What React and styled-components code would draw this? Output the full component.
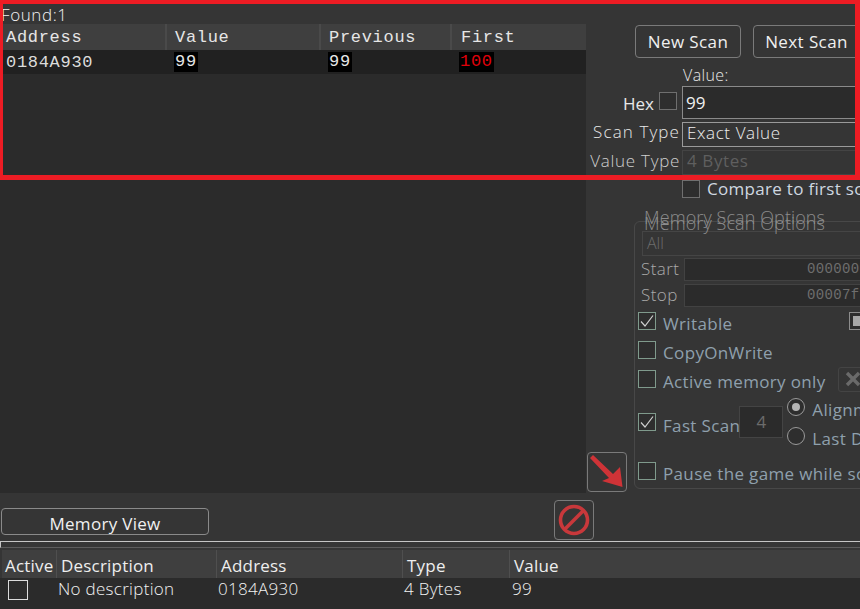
import React from "react";
import styled, { createGlobalStyle } from "styled-components";

const GlobalStyle = createGlobalStyle`
  html, body {
    margin: 0;
    padding: 0;
    background: #353535;
  }
  * {
    box-sizing: border-box;
  }
`;

const UI_FONT = `"Open Sans", "Noto Sans", sans-serif`;
const MONO_FONT = `"Liberation Mono", monospace`;

const foundColumns = [
  { name: "Address", width: 167, pad: 6 },
  { name: "Value", width: 154, pad: 8 },
  { name: "Previous", width: 131, pad: 8 },
  { name: "First", width: 132, pad: 9 },
];

const savedColumns = [
  { name: "Active", width: 55, pad: 3 },
  { name: "Description", width: 160, pad: 4 },
  { name: "Address", width: 186, pad: 4 },
  { name: "Type", width: 107, pad: 4 },
  { name: "Value", width: 200, pad: 4 },
];

const Window = styled.div`
  position: relative;
  width: 860px;
  height: 609px;
  overflow: hidden;
  display: flex;
  flex-direction: column;
  background: #353535;
  color: #e8e8e8;
  font-family: ${UI_FONT};
`;

const RedFrame = styled.div`
  position: absolute;
  left: 0;
  top: 0;
  width: 860px;
  height: 180px;
  border-style: solid;
  border-color: #ed1c24;
  border-width: 4px 5px 5px 3px;
  pointer-events: none;
`;

const TopArea = styled.div`
  display: flex;
  height: 493px;
`;

const ResultsPanel = styled.div`
  width: 586px;
  display: flex;
  flex-direction: column;
  background: #2b2b2b;
`;

const FoundBar = styled.div`
  height: 24px;
  padding: 5px 0 0 1px;
  background: #353535;
  font-size: 17px;
  font-weight: 300;
  line-height: 20px;
  letter-spacing: 0.6px;
  color: #f2f2f2;
`;

const MonoHeader = styled.div`
  display: flex;
  height: 26px;
  background: #3f3f3f;
`;

const MonoHeaderCell = styled.div`
  width: ${(p) => p.$width}px;
  padding-left: ${(p) => p.$pad}px;
  border-right: 2px solid #4a4a4a;
  font-family: ${MONO_FONT};
  font-size: 17px;
  letter-spacing: 0.7px;
  line-height: 27px;
  color: #e6e6e6;
  &:last-child {
    border-right: none;
  }
`;

const MonoRow = styled.div`
  display: flex;
  height: 24px;
  align-items: center;
  background: #212121;
  font-family: ${MONO_FONT};
  font-size: 17px;
  letter-spacing: 0.7px;
  color: #dcdcdc;
`;

const MonoCell = styled.div`
  width: ${(p) => p.$width}px;
  padding-left: ${(p) => p.$pad}px;
`;

const Highlight = styled.span`
  display: inline-block;
  height: 20px;
  line-height: 20px;
  padding: 0 1px;
  background: #000;
  color: ${(p) => (p.$red ? "#e0000a" : "#e6e6e6")};
`;

const ControlPanel = styled.div`
  flex: 1;
  min-width: 0;
  display: flex;
  flex-direction: column;
  padding-top: 25px;
  overflow: hidden;
`;

const ButtonRow = styled.div`
  display: flex;
  gap: 12px;
  padding-left: 49px;
`;

const ScanButton = styled.div`
  flex: none;
  width: ${(p) => p.$width}px;
  height: 33px;
  border: 1px solid #7a7a7a;
  border-radius: 4px;
  font-size: 17px;
  line-height: 31px;
  text-align: center;
  letter-spacing: 0.4px;
  color: #f0f0f0;
`;

const ScanForm = styled.div`
  display: grid;
  grid-template-columns: 94px 300px;
  grid-template-rows: 19px 33px 25px 25px;
  row-gap: 3px;
  margin-top: 6px;
  column-gap: 2px;
`;

const ValueLabel = styled.div`
  grid-column: 2;
  margin-bottom: -3px;
  padding: 2px 0 0 1px;
  font-size: 16px;
  font-weight: 300;
  line-height: 18px;
  letter-spacing: 0.4px;
  color: #e8e8e8;
`;

const HexCell = styled.div`
  display: flex;
  justify-content: flex-end;
  gap: 5px;
  padding: 6px 3px 0 0;
  font-size: 17px;
  line-height: 24px;
  color: #e8e8e8;
`;

const FormLabel = styled.div`
  text-align: right;
  white-space: nowrap;
  font-size: 17px;
  font-weight: 300;
  line-height: ${(p) => (p.$dim ? 21 : 20)}px;
  letter-spacing: ${(p) => (p.$dim ? 0.7 : 1.1)}px;
  color: ${(p) => (p.$dim ? "#cfcfcf" : "#e8e8e8")};
`;

const ValueInput = styled.div`
  height: 33px;
  padding-left: 3px;
  border: 1px solid #8a8a8a;
  background: #2b2b2b;
  font-size: 17px;
  line-height: 31px;
  color: #f0f0f0;
`;

const SelectBox = styled.div`
  height: 25px;
  padding-left: 4px;
  border: 1px solid ${(p) => (p.$disabled ? "#444" : "#9a9a9a")};
  font-size: 17px;
  font-weight: ${(p) => (p.$disabled ? 400 : 300)};
  line-height: ${(p) => (p.$disabled ? 20 : 19)}px;
  letter-spacing: 0.6px;
  color: ${(p) => (p.$disabled ? "#5f5f5f" : "#eeeeee")};
`;

const CompareRow = styled.div`
  display: flex;
  align-items: center;
  gap: 7px;
  height: 18px;
  margin: 5px 0 0 96px;
  white-space: nowrap;
  font-size: 17px;
  line-height: 20px;
  letter-spacing: 0.3px;
  color: #cfd8e0;
`;

const Check = styled.span`
  position: relative;
  flex: none;
  display: inline-block;
  width: 18px;
  height: 18px;
  border: 1px solid ${(p) => p.$border || "#6f6f6f"};
  background: #2e2e2e;
`;

const CheckMark = styled.svg`
  position: absolute;
  left: 1px;
  top: 1px;
  width: 14px;
  height: 14px;
  fill: none;
  stroke: #cfcfcf;
  stroke-width: 1.2;
`;

const LowerArea = styled.div`
  flex: 1;
  min-height: 0;
  display: flex;
  gap: 7px;
  margin-top: 23px;
  padding: 0 0 4px 1px;
`;

const ArrowButton = styled.div`
  flex: none;
  align-self: flex-end;
  display: flex;
  align-items: center;
  justify-content: center;
  width: 40px;
  height: 40px;
  margin-bottom: -3px;
  border: 1px solid #7a7a7a;
  border-radius: 4px;
`;

const GroupBox = styled.div`
  position: relative;
  flex: none;
  width: 300px;
  padding: 9px 0 0 3px;
  border: 1px solid #484848;
  border-radius: 6px;
`;

const GroupTitle = styled.div`
  position: absolute;
  left: 9px;
  top: ${(p) => p.$top}px;
  padding-right: 2px;
  white-space: nowrap;
  font-size: 18px;
  font-weight: 300;
  line-height: 20px;
  letter-spacing: 0.1px;
  color: #8c8c8c;
`;

const AllSelect = styled.div`
  height: 25px;
  margin-left: 4px;
  padding-left: 4px;
  border: 1px solid #454545;
  font-size: 16px;
  font-weight: 300;
  line-height: 23px;
  color: #6d6d6d;
`;

const RangeRow = styled.div`
  display: flex;
  height: 23px;
  margin-top: ${(p) => p.$top}px;
`;

const RangeLabel = styled.div`
  width: 46px;
  padding-left: 3px;
  font-size: 17px;
  font-weight: 300;
  line-height: 22px;
  letter-spacing: 0.4px;
  color: #a9a9a9;
`;

const RangeInput = styled.div`
  flex: 1;
  padding-left: 122px;
  border: 1px solid #424242;
  background: #2b2b2b;
  font-family: ${MONO_FONT};
  font-size: 14px;
  letter-spacing: 0.35px;
  line-height: 21px;
  white-space: nowrap;
  overflow: hidden;
  color: #6e6e6e;
`;

const OptionRow = styled.div`
  display: flex;
  align-items: center;
  height: ${(p) => p.$height || 18}px;
  margin-top: ${(p) => p.$top}px;
  white-space: nowrap;
`;

const OptionText = styled.span`
  margin-left: 7px;
  font-size: 17px;
  letter-spacing: 0.35px;
  color: #8fa0ad;
  position: relative;
  top: ${(p) => p.$drop || 2}px;
`;

const TriState = styled.span`
  flex: none;
  margin-left: ${(p) => p.$left}px;
  width: 18px;
  height: 18px;
  border: 1px solid #8c8c8c;
  padding: 3px;
  background: #2e2e2e;
  &::after {
    content: "";
    display: block;
    width: 100%;
    height: 100%;
    background: #a8a8a8;
  }
`;

const ClearButton = styled.div`
  flex: none;
  display: flex;
  align-items: center;
  justify-content: center;
  width: 30px;
  height: 25px;
  margin-left: 12px;
  border: 1px solid #444;
  border-radius: 3px;
`;

const AlignBox = styled.div`
  flex: none;
  width: 44px;
  height: 32px;
  margin-left: -1px;
  border: 1px solid #444;
  background: #2b2b2b;
  text-align: center;
  font-size: 17px;
  line-height: 30px;
  color: #6b6b6b;
`;

const RadioColumn = styled.div`
  display: flex;
  flex-direction: column;
  gap: 11px;
  margin-left: 4px;
`;

const RadioRow = styled.div`
  display: flex;
  align-items: center;
  height: 18px;
`;

const Radio = styled.span`
  flex: none;
  display: flex;
  align-items: center;
  justify-content: center;
  width: 18px;
  height: 18px;
  border: 1px solid #9a9a9a;
  border-radius: 50%;
  background: #2e2e2e;
  &::after {
    content: "";
    display: ${(p) => (p.$on ? "block" : "none")};
    width: 8px;
    height: 8px;
    border-radius: 50%;
    background: #b5b5b5;
  }
`;

const BottomArea = styled.div`
  flex: 1;
  display: flex;
  flex-direction: column;
`;

const ActionRow = styled.div`
  display: flex;
  height: 48px;
  padding: 7px 0 0 1px;
`;

const MemoryViewButton = styled.div`
  width: 208px;
  height: 27px;
  margin-top: 8px;
  border: 1px solid #8a8a8a;
  border-radius: 4px;
  text-align: center;
  font-size: 17px;
  line-height: 30px;
  letter-spacing: 0.3px;
  color: #f0f0f0;
`;

const StopButton = styled.div`
  display: flex;
  align-items: center;
  justify-content: center;
  width: 40px;
  height: 40px;
  margin-left: 345px;
  border: 1px solid #7a7a7a;
  border-radius: 4px;
`;

const Splitter = styled.div`
  height: 7px;
  border-top: 1px solid #c4c4c4;
  border-bottom: 1px solid #5c5c5c;
  border-left: 1px solid #c4c4c4;
`;

const SavedTable = styled.div`
  flex: 1;
  display: flex;
  flex-direction: column;
  margin-top: 2px;
  padding-left: 2px;
`;

const SavedHeader = styled.div`
  display: flex;
  height: 28px;
  background: #3f3f3f;
`;

const SavedHeaderCell = styled.div`
  flex: none;
  width: ${(p) => p.$width}px;
  padding-left: ${(p) => p.$pad}px;
  border-right: 1px solid #4f4f4f;
  font-size: 17px;
  line-height: 32px;
  letter-spacing: 0.2px;
  color: #eeeeee;
  &:last-child {
    border-right: none;
  }
`;

const SavedRow = styled.div`
  flex: 1;
  display: flex;
  align-items: flex-start;
  margin-left: -2px;
  padding-left: 2px;
  background: #2b2b2b;
  font-size: 17px;
  font-weight: 300;
  line-height: 22px;
  letter-spacing: 0.3px;
  color: #f2f2f2;
`;

const SavedCell = styled.div`
  flex: none;
  width: ${(p) => p.$width}px;
  padding-left: ${(p) => p.$pad}px;
`;

const ActiveBox = styled.span`
  display: block;
  width: 20px;
  height: 20px;
  margin: 2px 0 0 6px;
  border: 1px solid #dcdcdc;
`;

const CheckBox = ({ checked, border }) => (
  <Check $border={border}>
    {checked && (
      <CheckMark viewBox="0 0 14 14">
        <path d="M1 7.5 L5 12 L13 1.5" />
      </CheckMark>
    )}
  </Check>
);

const App = () => {
  return (
    <Window>
      <GlobalStyle />
      <TopArea>
        <ResultsPanel>
          <FoundBar>Found:1</FoundBar>
          <MonoHeader>
            {foundColumns.map((col) => (
              <MonoHeaderCell key={col.name} $width={col.width} $pad={col.pad}>
                {col.name}
              </MonoHeaderCell>
            ))}
          </MonoHeader>
          <MonoRow>
            <MonoCell $width={167} $pad={6}>0184A930</MonoCell>
            <MonoCell $width={154} $pad={7}><Highlight>99</Highlight></MonoCell>
            <MonoCell $width={131} $pad={7}><Highlight>99</Highlight></MonoCell>
            <MonoCell $width={132} $pad={7}><Highlight $red>100</Highlight></MonoCell>
          </MonoRow>
        </ResultsPanel>

        <ControlPanel>
          <ButtonRow>
            <ScanButton $width={106}>New Scan</ScanButton>
            <ScanButton $width={107}>Next Scan</ScanButton>
          </ButtonRow>

          <ScanForm>
            <ValueLabel>Value:</ValueLabel>
            <HexCell>
              Hex
              <CheckBox />
            </HexCell>
            <ValueInput>99</ValueInput>
            <FormLabel>Scan Type</FormLabel>
            <SelectBox>Exact Value</SelectBox>
            <FormLabel $dim>Value Type</FormLabel>
            <SelectBox $disabled>4 Bytes</SelectBox>
          </ScanForm>

          <CompareRow>
            <CheckBox />
            Compare to first scan
          </CompareRow>

          <LowerArea>
            <ArrowButton>
              <svg width="36" height="36" viewBox="0 0 36 36">
                <path d="M1 4 L4 1 L24 20 L31 13 L33.5 33 L13 27 L20 24 Z" fill="#cf3337" />
              </svg>
            </ArrowButton>

            <GroupBox>
              <GroupTitle $top={-15}>Memory Scan Options</GroupTitle>
              <GroupTitle $top={-9}>Memory Scan Options</GroupTitle>
              <AllSelect>All</AllSelect>
              <RangeRow $top={2}>
                <RangeLabel>Start</RangeLabel>
                <RangeInput>0000000000000000</RangeInput>
              </RangeRow>
              <RangeRow $top={3}>
                <RangeLabel>Stop</RangeLabel>
                <RangeInput>00007fffffffffff</RangeInput>
              </RangeRow>
              <OptionRow $top={5}>
                <CheckBox checked border="#7f9a8c" />
                <OptionText>Writable</OptionText>
                <TriState $left={117} />
              </OptionRow>
              <OptionRow $top={11}>
                <CheckBox border="#7f9a8c" />
                <OptionText>CopyOnWrite</OptionText>
              </OptionRow>
              <OptionRow $top={11}>
                <CheckBox border="#7f9a8c" />
                <OptionText>Active memory only</OptionText>
                <ClearButton>
                  <svg width="16" height="16" viewBox="0 0 16 16">
                    <path d="M2 2 L14 14 M14 2 L2 14" stroke="#6a6a6a" strokeWidth="3.4" />
                  </svg>
                </ClearButton>
              </OptionRow>
              <OptionRow $top={10} $height={47}>
                <CheckBox checked border="#7f9a8c" />
                <OptionText $drop={4}>Fast Scan</OptionText>
                <AlignBox>4</AlignBox>
                <RadioColumn>
                  <RadioRow>
                    <Radio $on />
                    <OptionText>Alignment</OptionText>
                  </RadioRow>
                  <RadioRow>
                    <Radio />
                    <OptionText>Last Digits</OptionText>
                  </RadioRow>
                </RadioColumn>
              </OptionRow>
              <OptionRow $top={17}>
                <CheckBox border="#7f9a8c" />
                <OptionText>Pause the game while scanning</OptionText>
              </OptionRow>
            </GroupBox>
          </LowerArea>
        </ControlPanel>
      </TopArea>

      <BottomArea>
        <ActionRow>
          <MemoryViewButton>Memory View</MemoryViewButton>
          <StopButton>
            <svg width="36" height="36" viewBox="0 0 36 36">
              <circle cx="18" cy="18" r="13.5" fill="none" stroke="#c8383b" strokeWidth="3.6" />
              <path d="M9 27 L27 9" stroke="#c8383b" strokeWidth="3.6" />
            </svg>
          </StopButton>
        </ActionRow>
        <Splitter />
        <SavedTable>
          <SavedHeader>
            {savedColumns.map((col) => (
              <SavedHeaderCell key={col.name} $width={col.width} $pad={col.pad}>
                {col.name}
              </SavedHeaderCell>
            ))}
          </SavedHeader>
          <SavedRow>
            <SavedCell $width={55}><ActiveBox /></SavedCell>
            <SavedCell $width={160} $pad={1}>No description</SavedCell>
            <SavedCell $width={186} $pad={1}>0184A930</SavedCell>
            <SavedCell $width={107} $pad={1}>4 Bytes</SavedCell>
            <SavedCell $width={200} $pad={2}>99</SavedCell>
          </SavedRow>
        </SavedTable>
      </BottomArea>
      <RedFrame />
    </Window>
  );
};

export default App;
